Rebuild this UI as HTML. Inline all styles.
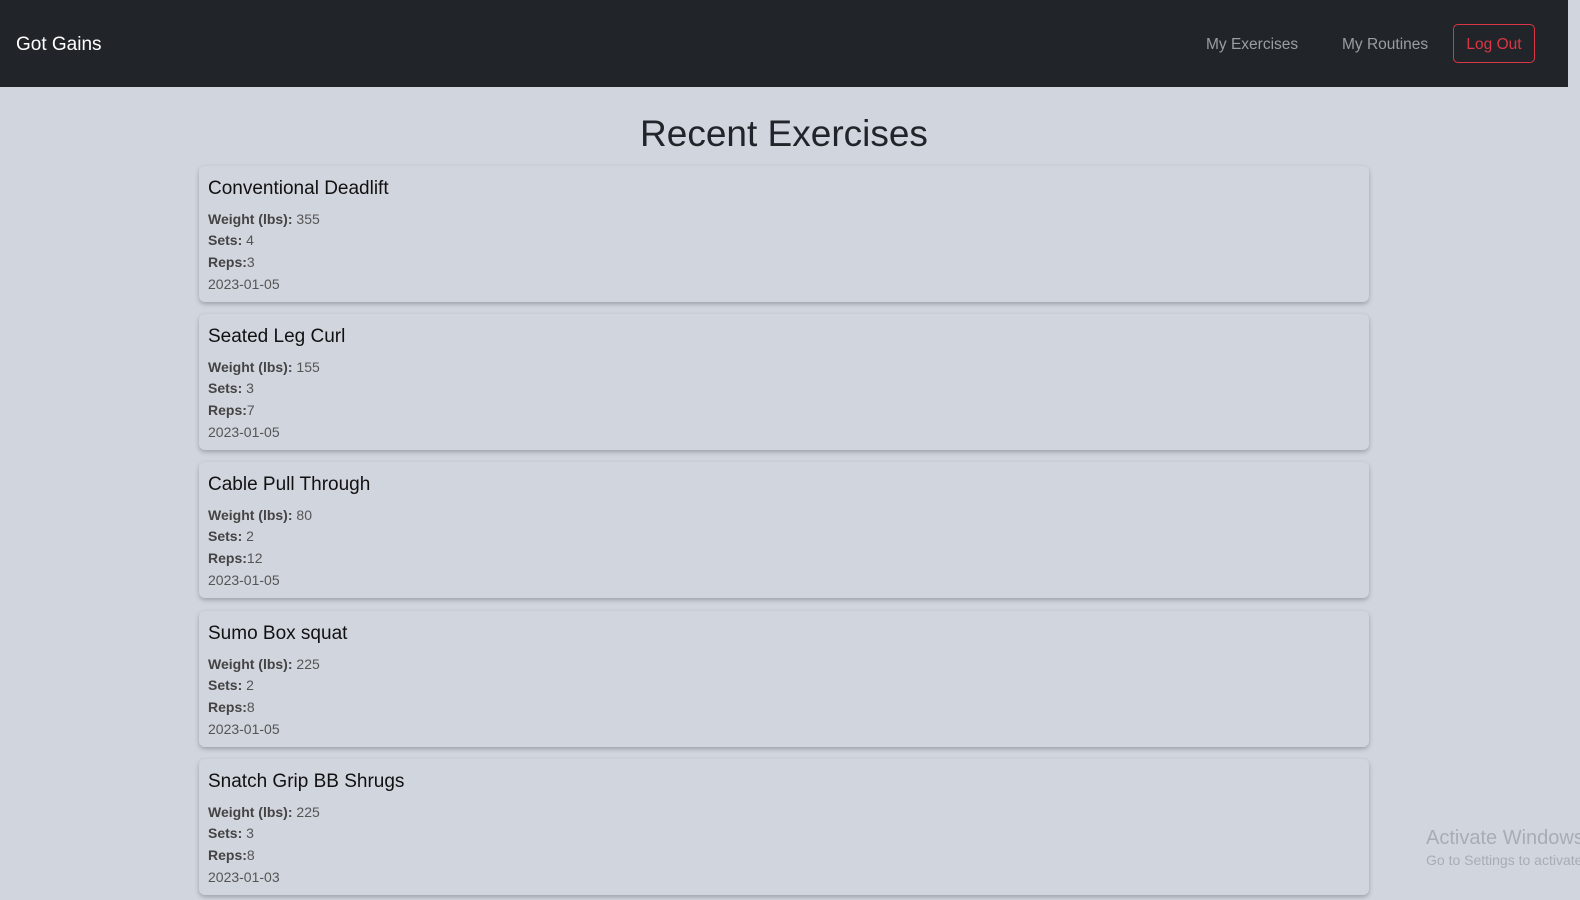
<!DOCTYPE html>
<html><head><style>
body{margin:0;background:#d1d5dd;font-family:"Liberation Sans",sans-serif;width:1580px;height:900px;overflow:hidden;position:relative}
nav{height:87px;background:#212529;position:relative;width:1568px}
.brand{position:absolute;left:16px;top:34px;color:#fff;font-size:19px}
.lnk{position:absolute;top:36px;color:#9a9da1;font-size:15.5px}
.out{position:absolute;left:1453px;top:24px;width:80px;height:37px;border:1px solid #dc3545;border-radius:5px;color:#dc3545;font-size:15.5px;text-align:center;line-height:39px}
h1{margin:0;position:absolute;left:0;width:1568px;top:113px;text-align:center;font-weight:normal;font-size:37px;color:#212529}
.card{position:absolute;left:199px;width:1170px;height:136px;border-radius:6px;background:#d1d5dd;box-shadow:0 2px 5px rgba(0,0,0,.25)}
.t{position:absolute;left:9px;top:12px;font-size:19px;color:#111}
.l{position:absolute;left:9px;font-size:14px;color:#555}
.l b{color:#444}
.wm{position:absolute;left:1426px;color:#a9adb3;white-space:nowrap}
</style></head><body>
<nav><div class="brand">Got Gains</div><div class="lnk" style="left:1206px">My Exercises</div><div class="lnk" style="left:1342px">My Routines</div><div class="out">Log Out</div></nav>
<h1>Recent Exercises</h1>
<div class="card" style="top:166px"><div class="t">Conventional Deadlift</div><div class="l" style="top:45px"><b>Weight (lbs):</b> 355</div><div class="l" style="top:66px"><b>Sets:</b> 4</div><div class="l" style="top:88px"><b>Reps:</b>3</div><div class="l" style="top:110px">2023-01-05</div></div>
<div class="card" style="top:314px"><div class="t">Seated Leg Curl</div><div class="l" style="top:45px"><b>Weight (lbs):</b> 155</div><div class="l" style="top:66px"><b>Sets:</b> 3</div><div class="l" style="top:88px"><b>Reps:</b>7</div><div class="l" style="top:110px">2023-01-05</div></div>
<div class="card" style="top:462px"><div class="t">Cable Pull Through</div><div class="l" style="top:45px"><b>Weight (lbs):</b> 80</div><div class="l" style="top:66px"><b>Sets:</b> 2</div><div class="l" style="top:88px"><b>Reps:</b>12</div><div class="l" style="top:110px">2023-01-05</div></div>
<div class="card" style="top:611px"><div class="t">Sumo Box squat</div><div class="l" style="top:45px"><b>Weight (lbs):</b> 225</div><div class="l" style="top:66px"><b>Sets:</b> 2</div><div class="l" style="top:88px"><b>Reps:</b>8</div><div class="l" style="top:110px">2023-01-05</div></div>
<div class="card" style="top:759px"><div class="t">Snatch Grip BB Shrugs</div><div class="l" style="top:45px"><b>Weight (lbs):</b> 225</div><div class="l" style="top:66px"><b>Sets:</b> 3</div><div class="l" style="top:88px"><b>Reps:</b>8</div><div class="l" style="top:110px">2023-01-03</div></div>
<div class="wm" style="top:827px;font-size:20px">Activate Windows</div>
<div class="wm" style="top:852px;font-size:14px">Go to Settings to activate Windows.</div>
</body></html>
